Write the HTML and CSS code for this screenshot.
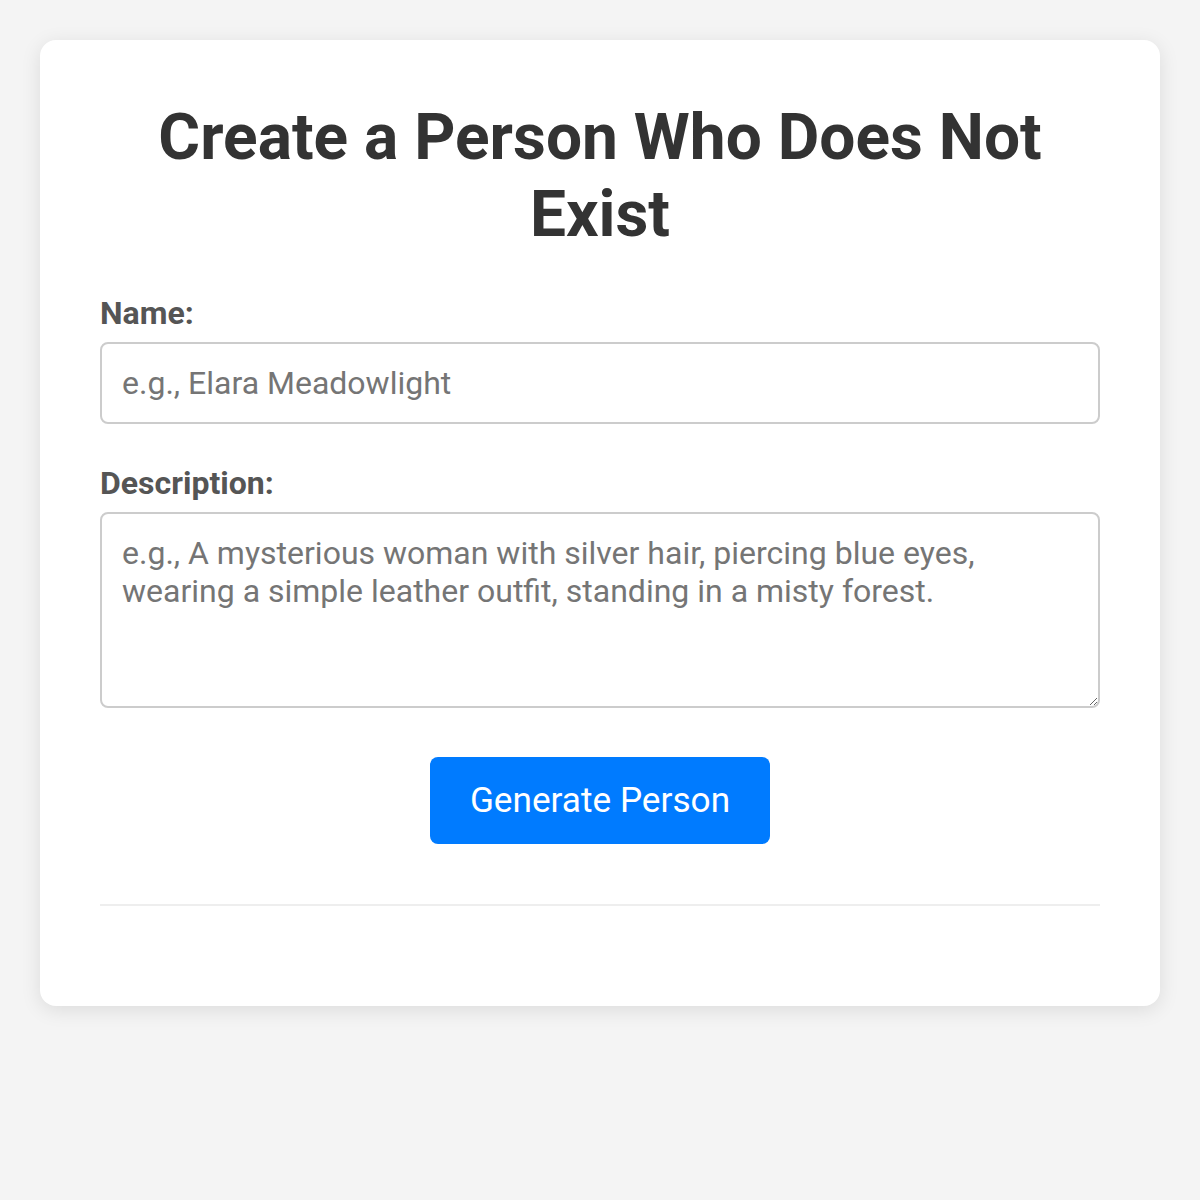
FILE: index.html
```html
<!DOCTYPE html>
<html lang="en">
<head>
    <meta charset="UTF-8">
    <meta name="viewport" content="width=device-width, initial-scale=1.0">
    <title>Create a Person Who Does Not Exist</title>
    <link rel="stylesheet" href="styles.css">
</head>
<body>
    <div class="container">
        <h1>Create a Person Who Does Not Exist</h1>

        <div class="form-group">
            <label for="name">Name:</label>
            <input type="text" id="name" placeholder="e.g., Elara Meadowlight">
        </div>

        <div class="form-group">
            <label for="description">Description:</label>
            <textarea id="description" rows="4" placeholder="e.g., A mysterious woman with silver hair, piercing blue eyes, wearing a simple leather outfit, standing in a misty forest."></textarea>
        </div>

        <div class="actions">
            <button class="btn" id="generateBtn">Generate Person</button>
        </div>

        <div class="result" id="result">
            
        </div>
    </div>
</body>
</html>
```

FILE: styles.css
```css
body {
    font-family: Roboto, Arial, sans-serif;
    background-color: #f4f4f4;
    color: #333;
    margin: 0;
    padding: 40px;
}
.container {
    background: #fff;
    border-radius: 16px;
    box-shadow: 0 4px 20px rgba(0, 0, 0, 0.1);
    padding: 60px;
}
h1 {
    font-size: 64px;
    line-height: 1.2;
    text-align: center;
    color: #333;
    margin: 0 0 40px;
}
.form-group {
    margin-bottom: 40px;
}
.form-group label {
    display: block;
    font-size: 32px;
    font-weight: bold;
    color: #555;
    margin-bottom: 10px;
}
.form-group input,
.form-group textarea {
    display: block;
    width: 100%;
    box-sizing: border-box;
    font-family: Roboto, Arial, sans-serif;
    font-size: 32px;
    color: #333;
    padding: 20px;
    border: 2px solid #ccc;
    border-radius: 8px;
}
.form-group input {
    height: 82px;
}
.form-group textarea {
    height: 196px;
    resize: vertical;
}
.form-group input::placeholder,
.form-group textarea::placeholder {
    color: #757575;
}
.actions {
    text-align: center;
    margin-top: 49px;
}
.btn {
    background: #007bff;
    color: #fff;
    font-family: Roboto, Arial, sans-serif;
    font-size: 35.2px;
    padding: 0 40px;
    border: none;
    border-radius: 8px;
    cursor: pointer;
    height: 87px;
}
.btn:hover {
    background: #0069d9;
}
.result {
    margin-top: 60px;
    padding-top: 40px;
    border-top: 2px solid #eee;
}
```
